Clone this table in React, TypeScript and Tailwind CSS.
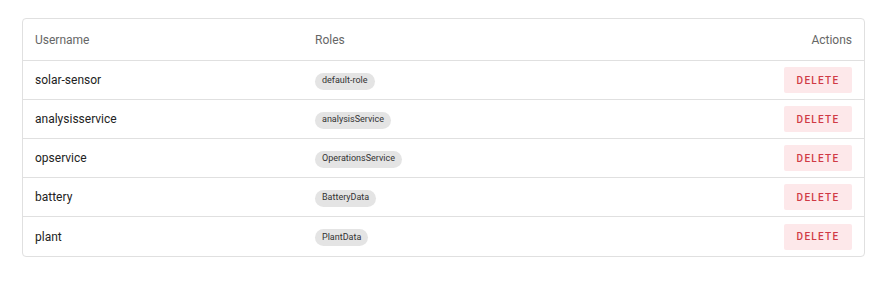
const USERS = [
    { username: 'solar-sensor', role: 'default-role' },
    { username: 'analysisservice', role: 'analysisService' },
    { username: 'opservice', role: 'OperationsService' },
    { username: 'battery', role: 'BatteryData' },
    { username: 'plant', role: 'PlantData' },
];

export default function App() {
    return (
        <div className="min-h-screen bg-white pt-[18px] px-[22px] font-['Roboto',sans-serif]">
            <div className="w-[843px] border border-[#e0e0e0] rounded-[4px] bg-white">
                {/* Header */}
                <div className="grid grid-cols-[280px_1fr_auto] items-center h-[42px] px-3 border-b border-[#e0e0e0] text-[12px] text-[#666666]">
                    <span>Username</span>
                    <span>Roles</span>
                    <span className="text-right">Actions</span>
                </div>

                {USERS.map((u, i) => (
                    <div
                        key={u.username}
                        className={`grid grid-cols-[280px_1fr_auto] items-center h-[39px] px-3 text-[12px] text-[#222222] ${i < USERS.length - 1 ? 'border-b border-[#e0e0e0]' : ''}`}
                    >
                        <span>{u.username}</span>
                        <span>
                            <span className="inline-flex items-center h-[17px] px-[7px] rounded-full bg-[#e4e4e4] text-[9px] text-[#333333]">
                                {u.role}
                            </span>
                        </span>
                        <button className="h-[26px] w-[68px] rounded-[2px] bg-[#fde8ea] text-[10px] font-medium tracking-[1.3px] text-[#d03a46]">
                            DELETE
                        </button>
                    </div>
                ))}
            </div>
        </div>
    );
}
